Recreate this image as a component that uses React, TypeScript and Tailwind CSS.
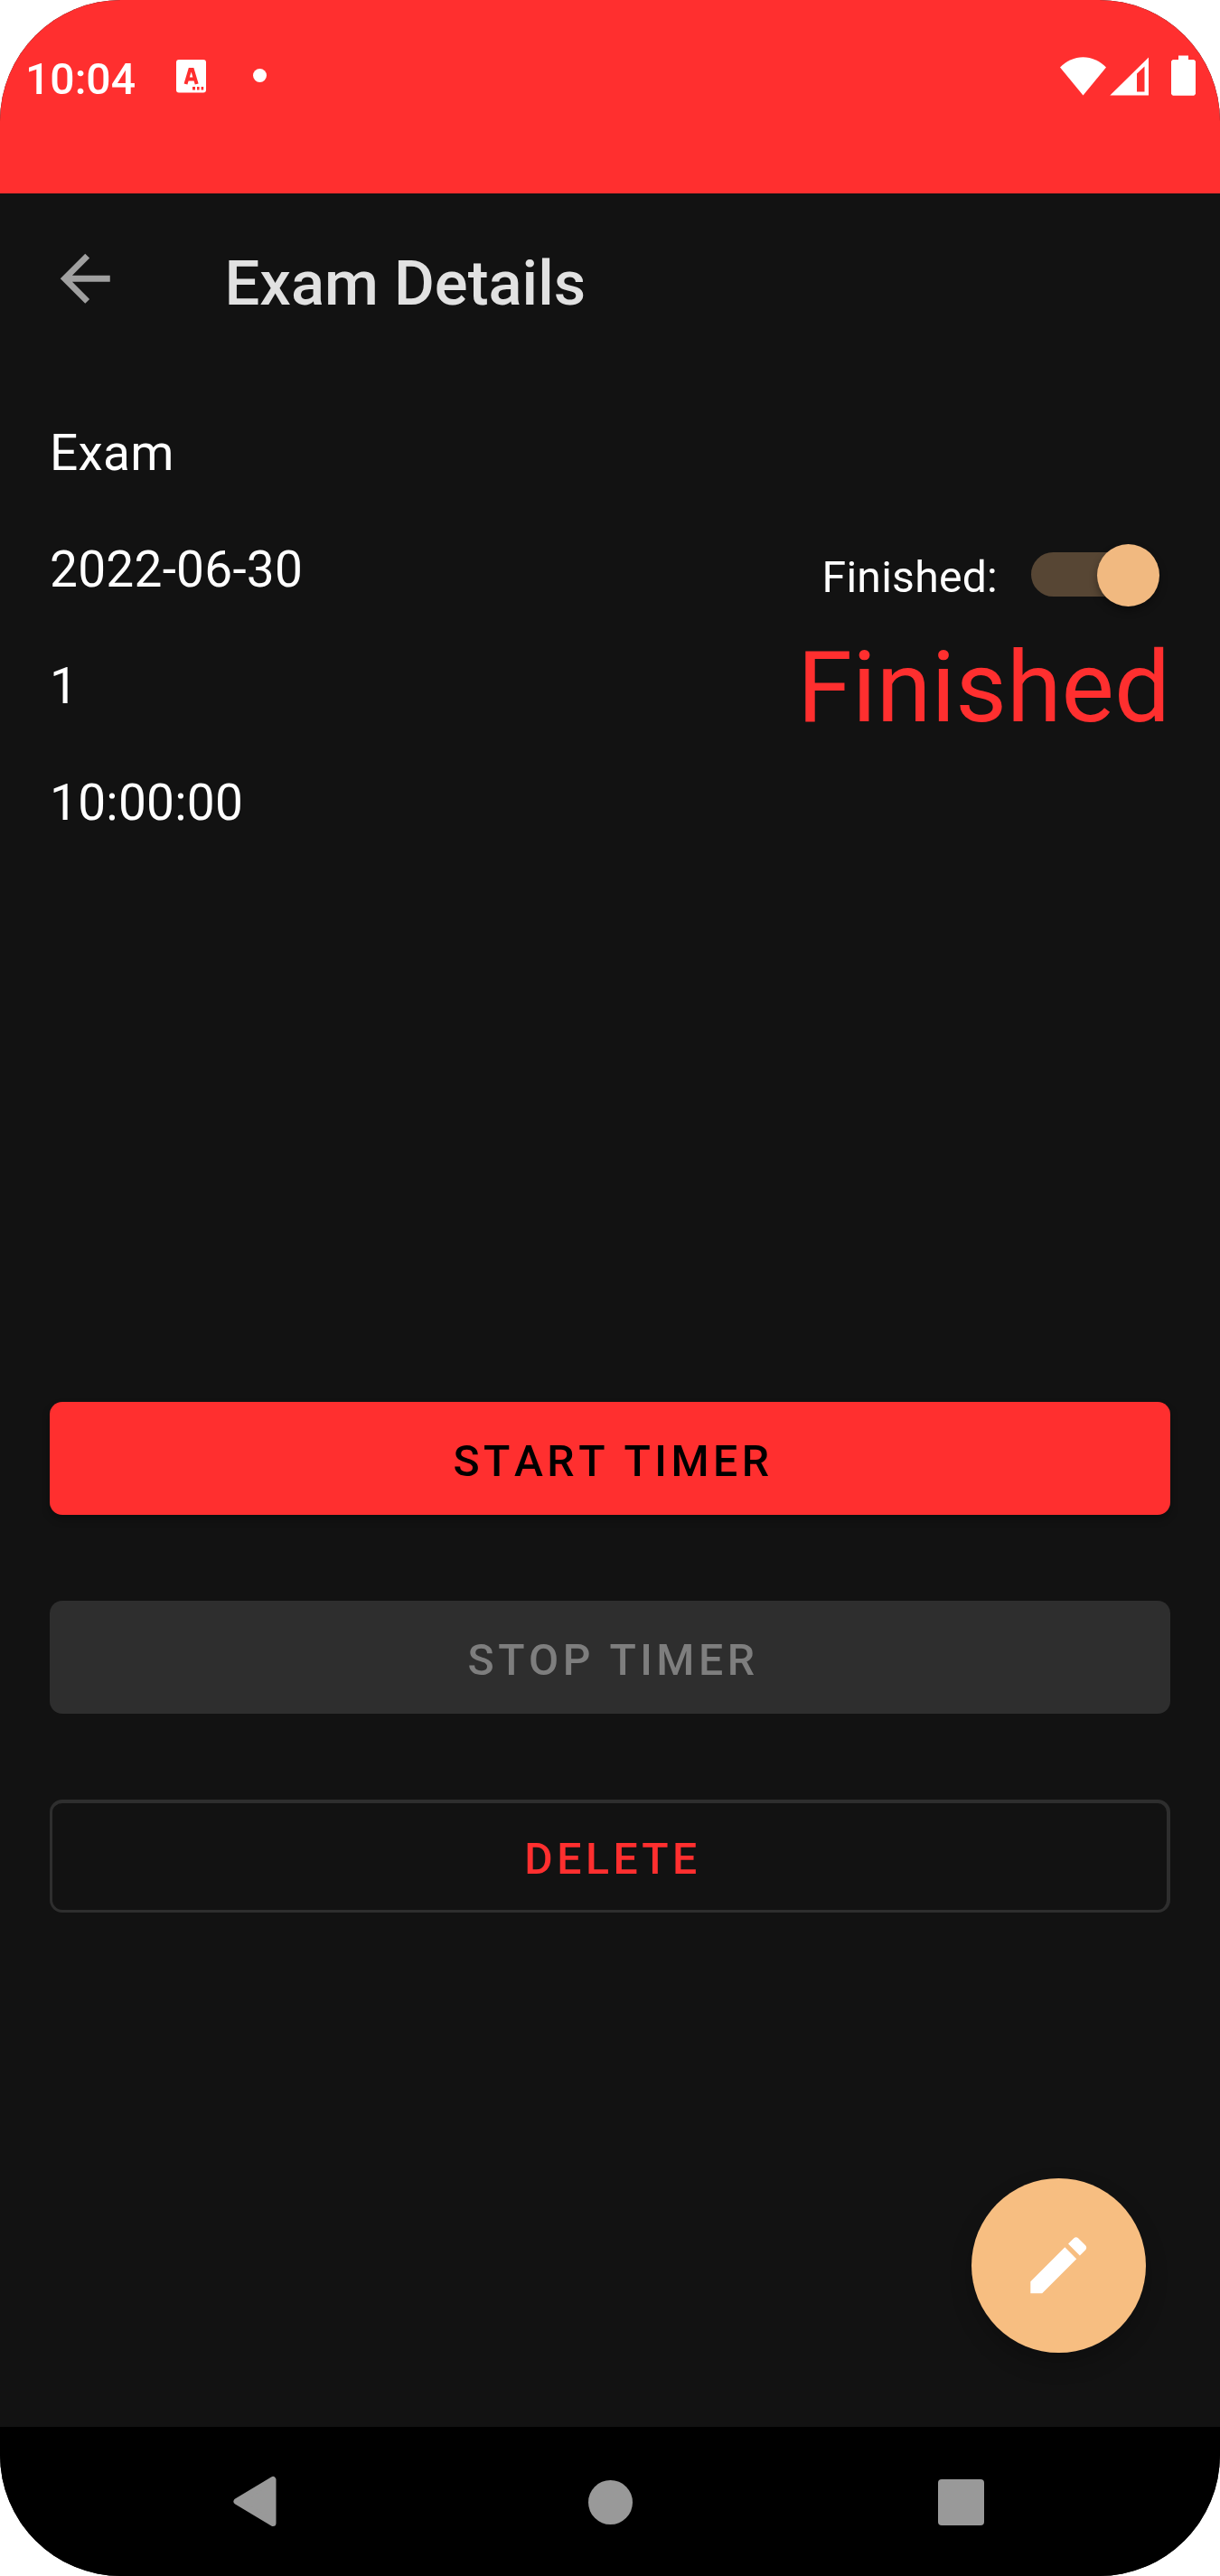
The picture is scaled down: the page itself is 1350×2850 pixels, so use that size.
import type { ReactNode } from "react";

function StatusBar() {
  return (
    <header className="flex h-[214px] shrink-0 items-start justify-between bg-[#ff2f2f] pl-[28px] pr-[27px] text-white">
      <div className="flex items-start">
        <span className="mt-[60px] w-[167px] text-[48.125px] font-medium leading-[56px]">10:04</span>
        <svg className="mt-[66px] h-[37px] w-[33px]" viewBox="0 0 33 37">
          <rect width="33" height="36.5" rx="3" fill="#fff" />
          <path d="M10.5 27 15.3 11h2.6L22.7 27M12.7 21.5h8" fill="none" stroke="#ff2f2f" strokeWidth="4" />
          <path d="M18 30h3v3.5h-3zM23 30h2.6v3.5H23zM27.6 30h2.6v3.5h-2.6z" fill="#ff2f2f" />
        </svg>
        <span className="ml-[52px] mt-[76px] size-[15px] rounded-full bg-white" />
      </div>
      <div className="flex items-start">
        <svg className="mt-[63px] h-[43px] w-[51px]" viewBox="0 0 51 43" fill="#fff">
          <path d="M0 11.5C7 4.500 16 .3 25.500 .3S44 4.500 51 11.500L25.500 42.500z" />
        </svg>
        <svg className="ml-[4px] mt-[63px] h-[43px] w-[43px]" viewBox="0 0 43 43">
          <path fill="#fff" fillRule="evenodd" d="M.3 42.500 43 .4V42.500zM30 18.500V38.500H38.500V10.500z" />
        </svg>
        <svg className="ml-[25px] mt-[61px] h-[45px] w-[27px]" viewBox="0 0 27 45" fill="#fff">
          <path d="M8 .5h11V5h6.200L27 6.800V43l-1.800 1.700H1.800L0 43V6.800L1.800 5H8z" />
        </svg>
      </div>
    </header>
  );
}

function AppBar() {
  return (
    <div className="flex h-[192px] shrink-0 items-start pl-[53px]">
      <svg className="mt-[53px] size-[82.5px]" viewBox="0 0 24 24" fill="#a0a0a0">
        <path d="M20 11H7.830l5.590-5.590L12 4l-8 8 8 8 1.410-1.410L7.830 13H20v-2z" />
      </svg>
      <h1 className="ml-[113px] mt-[60px] text-[68.75px] font-medium leading-[80px] text-[#e1e1e1]">Exam Details</h1>
    </div>
  );
}

function FinishedSwitch() {
  return (
    <div className="flex items-start">
      <span className="mt-[12px] text-[48.125px] leading-[56px] tracking-[0.25px]">Finished:</span>
      <button role="switch" aria-checked="true" aria-label="Finished" className="relative ml-[37px] mt-[12px] h-[49px] w-[134px] rounded-full bg-[#574634]">
        <span className="absolute -top-[9px] left-[73px] size-[69px] rounded-full bg-[#f1b980] shadow-[0_5px_8px_rgba(0,0,0,0.35)]" />
      </button>
    </div>
  );
}

function ActionButton({ className, children }: { className: string; children: ReactNode }) {
  return (
    <button className={`flex h-[125px] w-full items-center justify-center rounded-[14px] text-[48.125px] font-medium uppercase leading-[56px] tracking-[0.094em] [font-kerning:none] ${className}`}>
      <span className="pl-[7px] pt-[6px]">{children}</span>
    </button>
  );
}

function NavigationBar() {
  return (
    <nav className="flex h-[165px] shrink-0 items-center bg-black pl-[258px]">
      <svg className="h-[57px] w-[48px]" viewBox="0 0 48 57">
        <path d="M4 28.500 44 4.500V52.500z" fill="#999" stroke="#999" strokeWidth="7" strokeLinejoin="round" />
      </svg>
      <span className="ml-[345px] mt-[2px] size-[49px] rounded-full bg-[#999]" />
      <span className="ml-[338px] mt-[2px] size-[51px] rounded-[4px] bg-[#999]" />
    </nav>
  );
}

export default function App() {
  return (
    <div className="h-[2850px] w-[1350px] bg-white font-['Roboto',sans-serif]">
      <div className="flex h-full w-full flex-col overflow-hidden rounded-[134px] bg-[#121212] text-white">
        <StatusBar />
        <AppBar />
        <main className="flex flex-1 flex-col px-[55px] pt-[63px]">
          <section className="flex h-[1082px] items-start justify-between">
            <div className="flex flex-col gap-[65px] text-[55px] leading-[64px] tracking-[0.25px]">
              <p>Exam</p>
              <p>2022-06-30</p>
              <p>1</p>
              <p>10:00:00</p>
            </div>
            <div className="flex flex-col items-end pt-[130px]">
              <div className="pr-[20px]">
                <FinishedSwitch />
              </div>
              <p className="mt-[30px] text-[110px] leading-[128px] text-[#ff2f2f]">Finished</p>
            </div>
          </section>
          <section className="flex flex-col gap-[95px]">
            <ActionButton className="bg-[#ff2f2f] text-black shadow-[0_5px_8px_rgba(0,0,0,0.3)]">Start timer</ActionButton>
            <ActionButton className="bg-[#2e2e2e] text-[#7e7e7e]">Stop timer</ActionButton>
            <ActionButton className="border-b-[3px] border-l-[3px] border-r-[4px] border-t-[4px] border-[#2e2e2e] text-[#ff2f2f]">Delete</ActionButton>
          </section>
          <button aria-label="Edit" className="mb-[82px] mr-[27px] mt-auto flex size-[193px] items-center justify-center self-end rounded-full bg-[#f7be81] shadow-[0_12px_24px_rgba(0,0,0,0.22)]">
            <svg className="size-[82.5px]" viewBox="0 0 24 24" fill="#fff">
              <path d="M3 17.250V21h3.750L17.810 9.940l-3.750-3.750L3 17.250zM20.710 7.040c.390-.390.390-1.020 0-1.410l-2.340-2.340c-.390-.390-1.020-.390-1.410 0l-1.830 1.830 3.750 3.750 1.830-1.830z" />
            </svg>
          </button>
        </main>
        <NavigationBar />
      </div>
    </div>
  );
}
